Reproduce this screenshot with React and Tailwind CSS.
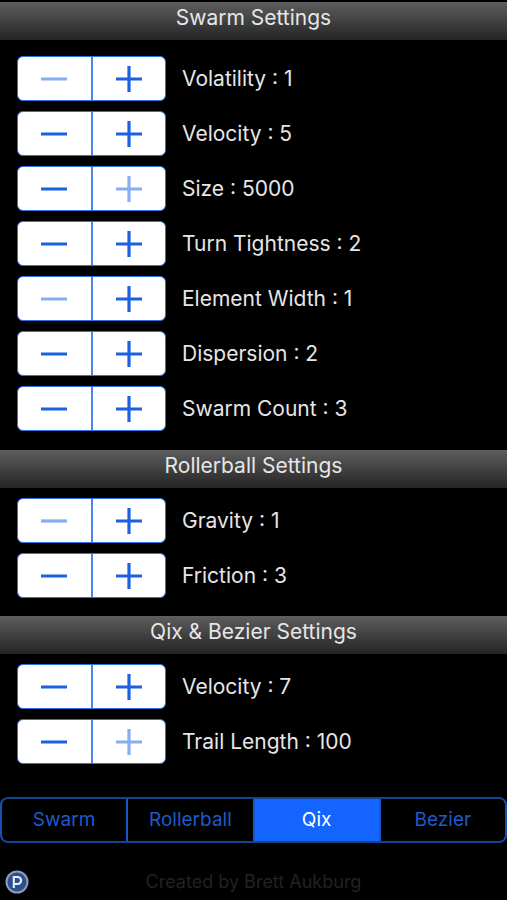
import { useState } from "react";

const SECTIONS = [
  {
    title: "Swarm Settings",
    rows: [
      { name: "Volatility", value: 1, min: 1, max: 10 },
      { name: "Velocity", value: 5, min: 1, max: 10 },
      { name: "Size", value: 5000, min: 1000, max: 5000, step: 500 },
      { name: "Turn Tightness", value: 2, min: 1, max: 10 },
      { name: "Element Width", value: 1, min: 1, max: 10 },
      { name: "Dispersion", value: 2, min: 1, max: 10 },
      { name: "Swarm Count", value: 3, min: 1, max: 10 },
    ],
  },
  {
    title: "Rollerball Settings",
    rows: [
      { name: "Gravity", value: 1, min: 1, max: 10 },
      { name: "Friction", value: 3, min: 1, max: 10 },
    ],
  },
  {
    title: "Qix & Bezier Settings",
    rows: [
      { name: "Velocity", value: 7, min: 1, max: 10 },
      { name: "Trail Length", value: 100, min: 10, max: 100, step: 10 },
    ],
  },
];

const TABS = ["Swarm", "Rollerball", "Qix", "Bezier"];

function StepButton({ label, disabled, onClick, children }) {
  return (
    <button
      type="button"
      aria-label={label}
      disabled={disabled}
      onClick={onClick}
      className="flex flex-1 items-center justify-center border-[#4a86ee] text-[#1a62e0] disabled:text-[#86aef2]"
    >
      <svg width="26" height="26" viewBox="0 0 26 26" fill="none" stroke="currentColor" strokeWidth="3.2">
        {children}
      </svg>
    </button>
  );
}

function StepperRow({ row }) {
  const [value, setValue] = useState(row.value);
  const step = row.step ?? 1;
  return (
    <div className="flex items-center gap-4">
      <div
        role="group"
        aria-label={row.name}
        className="flex h-[45px] w-[149px] shrink-0 divide-x-2 overflow-hidden rounded-md border border-[#2f72e6] bg-white"
      >
        <StepButton label={`Decrease ${row.name}`} disabled={value <= row.min} onClick={() => setValue(value - step)}>
          <path d="M0 13H26" />
        </StepButton>
        <StepButton label={`Increase ${row.name}`} disabled={value >= row.max} onClick={() => setValue(value + step)}>
          <path d="M0 13H26M13 0V26" />
        </StepButton>
      </div>
      <output>{`${row.name} : ${value}`}</output>
    </div>
  );
}

export default function App() {
  const [tab, setTab] = useState("Qix");
  return (
    <main className="min-h-screen bg-black pt-0.5 font-['Inter','Liberation_Sans',sans-serif] text-[21px] leading-8 text-[#e6e6e6]">
      {SECTIONS.map((section, i) => (
        <section key={section.title}>
          <h2 className="bg-linear-to-b from-[#5e5e5e] to-[#252525] pb-1.5 text-center">{section.title}</h2>
          <div className={`flex flex-col gap-2.5 px-[17px] ${i === 0 ? "pt-4 pb-[19px]" : i === 1 ? "pt-2.5 pb-[18px]" : "pt-2.5 pb-[33px]"}`}>
            {section.rows.map((row) => (
              <StepperRow key={row.name} row={row} />
            ))}
          </div>
        </section>
      ))}
      <div role="tablist" className="flex h-[46px] divide-x-2 overflow-hidden rounded-lg border-2 border-x-[#1550b8] border-y-[#14438f] text-[19px]">
        {TABS.map((name) => (
          <button
            key={name}
            type="button"
            role="tab"
            aria-selected={tab === name}
            onClick={() => setTab(name)}
            className="flex-1 border-[#1658c8] text-[#1b5cca] aria-selected:bg-[#1464ff] aria-selected:text-white"
          >
            {name}
          </button>
        ))}
      </div>
      <footer className="grid grid-cols-[24px_1fr_24px] items-center px-[5px] pt-[25px] text-lg text-[#222222]">
        <svg width="24" height="24" viewBox="0 0 24 24" fill="none" aria-hidden="true">
          <circle cx="12" cy="12" r="10.5" fill="#2f4f8c" stroke="#8d9dbd" strokeWidth="2" />
          <path d="M8.8 18V7H12.6A3.5 3.5 0 0 1 12.6 14H8.8" stroke="#e8eef8" strokeWidth="2.1" />
        </svg>
        <p className="text-center">Created by Brett Aukburg</p>
      </footer>
    </main>
  );
}
